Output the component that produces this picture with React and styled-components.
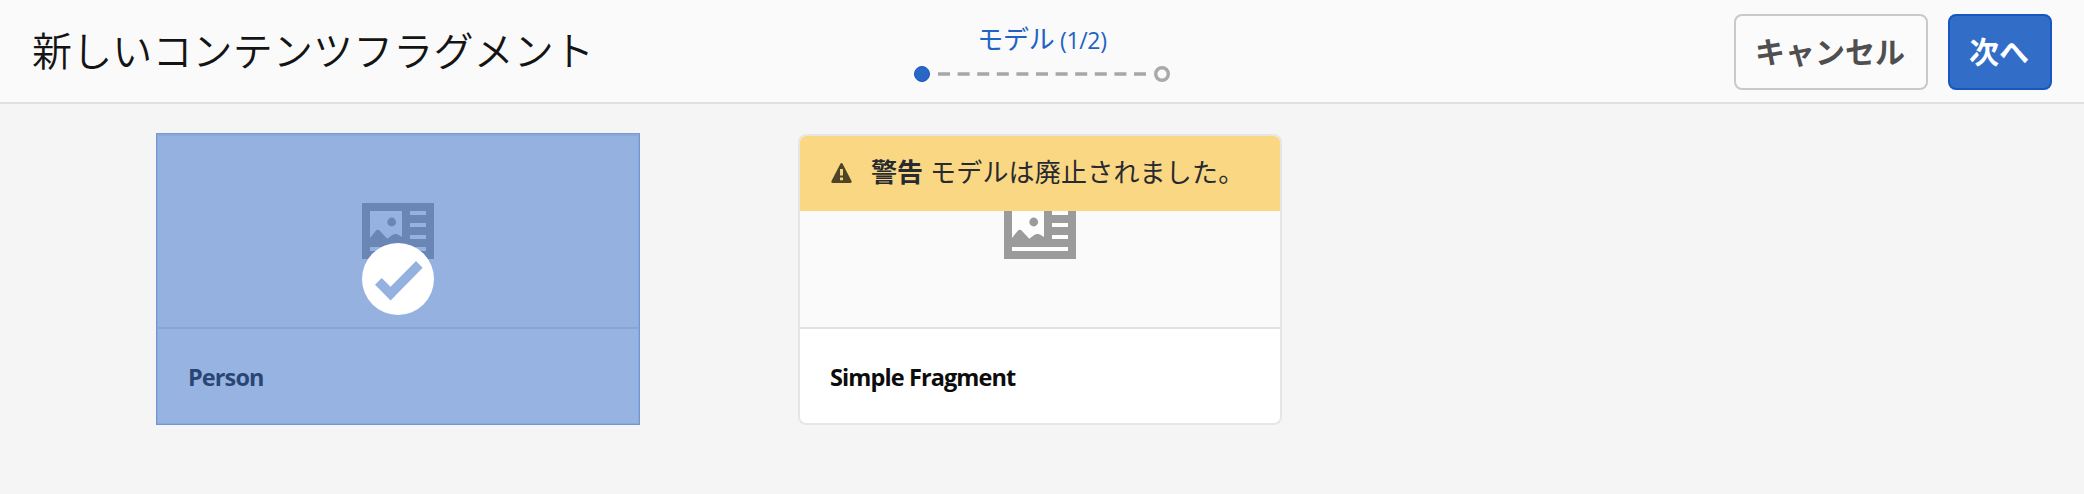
import React from "react";
import styled, { createGlobalStyle } from "styled-components";

const GlobalStyle = createGlobalStyle`
  * { box-sizing: border-box; }
  body {
    margin: 0;
    background: #f5f5f5;
    color: #141414;
    font-family: "Open Sans", "Noto Sans CJK JP", sans-serif;
  }
`;

const Page = styled.div`
  display: flex;
  flex-direction: column;
  width: 2084px;
  height: 494px;
  overflow: hidden;
`;

const Header = styled.header`
  display: grid;
  grid-template-columns: 1fr auto 1fr;
  height: 104px;
  padding: 0 32px;
  background: #fafafa;
  border-bottom: 2px solid #e1e1e1;
`;

const Title = styled.h1`
  margin: 0;
  padding-top: 19px;
  font: 350 40px/60px "Noto Sans CJK JP", sans-serif;
  letter-spacing: 0.15px;
  white-space: nowrap;
`;

const Wizard = styled.div`
  display: flex;
  flex-direction: column;
  align-items: center;
  width: 256px;
  padding-top: 19px;
`;

const StepLabel = styled.div`
  height: 38px;
  color: #2062c6;
  font: 400 26px/38px "Noto Sans CJK JP", sans-serif;
  letter-spacing: -0.3px;
  white-space: nowrap;
`;

const StepCount = styled.span`
  font: 400 23px/30px "Open Sans", sans-serif;
`;

const Track = styled.svg`
  display: block;
  width: 256px;
  height: 20px;
  margin-top: 7px;
`;

const Actions = styled.div`
  display: flex;
  justify-content: flex-end;
  gap: 20px;
  padding-top: 14px;
`;

const Button = styled.button`
  width: ${(p) => (p.$primary ? 104 : 194)}px;
  height: 76px;
  padding: 0 2px 5px 0;
  border: 2px solid ${(p) => (p.$primary ? "#1757c0" : "#c9c9c9")};
  border-radius: 8px;
  background: ${(p) => (p.$primary ? "#326ec8" : "#fbfbfb")};
  color: ${(p) => (p.$primary ? "#fff" : "#4f4f4f")};
  font: 700 30px/44px "Noto Sans CJK JP", sans-serif;
  white-space: nowrap;
`;

const Cards = styled.main`
  display: flex;
  gap: 158px;
  padding: 30px 156px;
`;

const Card = styled.article`
  position: relative;
  display: flex;
  flex-direction: column;
  width: 484px;
  height: 291px;
  overflow: ${(p) => (p.$selected ? "visible" : "hidden")};
  border: 2px solid #e6e6e6;
  border-radius: ${(p) => (p.$selected ? 0 : 8)}px;
  background: #fff;
`;

const Preview = styled.div`
  display: flex;
  justify-content: center;
  height: 193px;
  padding-top: 67px;
  background: #fafafa;
  border-bottom: 2px solid #e1e1e1;
`;

const CardName = styled.div`
  padding: 28px 30px 0;
  color: #0c0c0c;
  font: 700 23.5px/40px "Open Sans", sans-serif;
  letter-spacing: -0.9px;
  white-space: nowrap;
`;

const Banner = styled.div`
  position: absolute;
  inset: 0 0 auto;
  display: flex;
  align-items: center;
  height: 75px;
  padding: 0 31px 2px;
  background: #fad783;
  color: #272a30;
  font: 400 26px/40px "Noto Sans CJK JP", sans-serif;
  white-space: nowrap;

  svg { margin: 0 19px 0 0; }
`;

const BannerTitle = styled.strong`
  margin: -3px 7px 0 0;
  font-weight: 700;
`;

const BannerText = styled.span`
  margin-top: -3px;
  letter-spacing: 0.2px;
`;

const Selection = styled.div`
  position: absolute;
  inset: -3px -2px -2px;
  display: flex;
  align-items: center;
  justify-content: center;
  background: rgba(65, 117, 203, 0.55);
  box-shadow: inset 0 0 0 1px rgba(62, 117, 205, 0.35);
`;

const Check = styled.svg`
  width: 72px;
  height: 72px;
`;

function FragmentIcon() {
  return (
    <svg width="72" height="56" viewBox="0 0 72 56">
      <path d="M0 0H72V56H0Z" fill="#9b9b9b" />
      <path
        d="M8 8H40V34Q36 31 33.5 30.8Q31 31 25.3 35.8L17.8 27.8Q15.7 25.6 13.8 27.8L8 35Z M48 8H64V12H48Z M48 20H64V24H48Z M48 32H64V36H48Z M8 44H64V48H8Z"
        fill="#fdfdfd"
      />
      <circle cx="29.7" cy="19" r="4.4" fill="#9b9b9b" />
    </svg>
  );
}

function AlertIcon() {
  return (
    <svg width="21" height="20" viewBox="0 0 21 20">
      <path d="M9.4 .8Q10.5 -.8 11.6 .8L20.5 18Q21 20 19.3 20H1.7Q0 20 .5 18Z" fill="#4c4424" />
      <path d="M9 6H12V12.5H9Z M9 14.5H12V17.3H9Z" fill="#f3d180" />
    </svg>
  );
}

function StepTrack() {
  return (
    <Track viewBox="0 0 256 20">
      <circle cx="8" cy="10" r="7.5" fill="#2867c6" stroke="#1757c0" />
      <path d="M24 10H232" stroke="#a7a7a7" strokeWidth="3.4" strokeDasharray="12 7.6" />
      <circle cx="248" cy="10" r="6.3" fill="#fafafa" stroke="#a9a9a9" strokeWidth="3.4" />
    </Track>
  );
}

export default function App() {
  return (
    <Page>
      <GlobalStyle />
      <Header>
        <Title>新しいコンテンツフラグメント</Title>
        <Wizard>
          <StepLabel>
            モデル <StepCount>(1/2)</StepCount>
          </StepLabel>
          <StepTrack />
        </Wizard>
        <Actions>
          <Button>キャンセル</Button>
          <Button $primary>次へ</Button>
        </Actions>
      </Header>
      <Cards>
        <Card $selected>
          <Preview>
            <FragmentIcon />
          </Preview>
          <CardName>Person</CardName>
          <Selection>
            <Check viewBox="0 0 72 72">
              <circle cx="36" cy="36" r="36" fill="#fff" />
              <path d="M13 41.7L19.7 35L28.5 43.7L54 18L60.7 24.7L28.6 57.5Z" fill="#94b1e0" />
            </Check>
          </Selection>
        </Card>
        <Card>
          <Preview>
            <FragmentIcon />
          </Preview>
          <CardName>Simple Fragment</CardName>
          <Banner>
            <AlertIcon />
            <BannerTitle>警告</BannerTitle>
            <BannerText>モデルは廃止されました。</BannerText>
          </Banner>
        </Card>
      </Cards>
    </Page>
  );
}
